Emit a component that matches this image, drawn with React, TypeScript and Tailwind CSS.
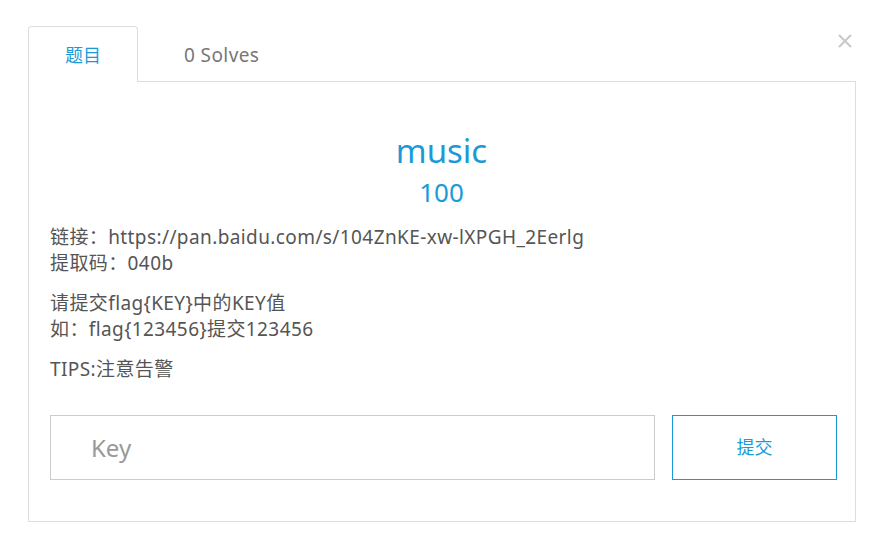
import React, { useState } from 'react';

const font = { fontFamily: '"Noto Sans", "Noto Sans CJK SC", sans-serif' };

export default function App() {
  const [key, setKey] = useState('');

  return (
    <div className="w-[883px] h-[552px] bg-white relative" style={font}>
      {/* close */}
      <button className="absolute left-[836px] top-[32px] w-[18px] h-[18px] flex items-center justify-center text-[#c8c8c8]">
        <svg width="14" height="14" viewBox="0 0 14 14" fill="none" stroke="currentColor" strokeWidth="2">
          <path d="M1 1L13 13M13 1L1 13" />
        </svg>
      </button>

      <div className="pt-[26px] pl-[28px] w-[856px]">
        {/* tabs */}
        <div className="flex h-[56px]">
          <div className="w-[110px] border border-b-0 border-[#dddddd] rounded-t-[4px] flex items-center justify-center pt-[2px] text-[18px] text-[#1a9bd7] bg-white">
            题目
          </div>
          <div className="flex-1 border-b border-[#dddddd] flex items-center pt-[3px]">
            <span className="ml-[46px] text-[19px] tracking-[0.4px] text-[#777777]">0 Solves</span>
          </div>
        </div>

        {/* panel */}
        <div className="h-[440px] border border-t-0 border-[#dddddd] pl-[21px] pr-[18px] pt-[48px]">
          <div className="pr-[4px] text-center text-[#1a9bd7]">
            <h1 className="text-[33px] leading-[42px]">music</h1>
            <div className="text-[26px] leading-[36px] mt-[2px]">100</div>
          </div>

          <div className="mt-[14px] text-[19px] tracking-[0.4px] leading-[26px] text-[#555555]">
            <p>链接：https://pan.baidu.com/s/104ZnKE-xw-lXPGH_2Eerlg</p>
            <p>提取码：040b</p>
            <p className="mt-[14px]">请提交flag&#123;KEY&#125;中的KEY值</p>
            <p>如：flag&#123;123456&#125;提交123456</p>
            <p className="mt-[14px]">TIPS:注意告警</p>
          </div>

          <div className="flex gap-[17px] mt-[33px]">
            <input
              value={key}
              onChange={e => setKey(e.target.value)}
              placeholder="Key"
              className="w-[605px] shrink-0 h-[65px] border border-[#cccccc] px-[40px] text-[24px] text-[#555555] placeholder:text-[#999999] outline-none"
              style={font}
            />
            <button className="w-[165px] shrink-0 h-[65px] border border-[#1a9bd7] text-[18px] text-[#1a9bd7] bg-white">
              提交
            </button>
          </div>
        </div>
      </div>
    </div>
  );
}
